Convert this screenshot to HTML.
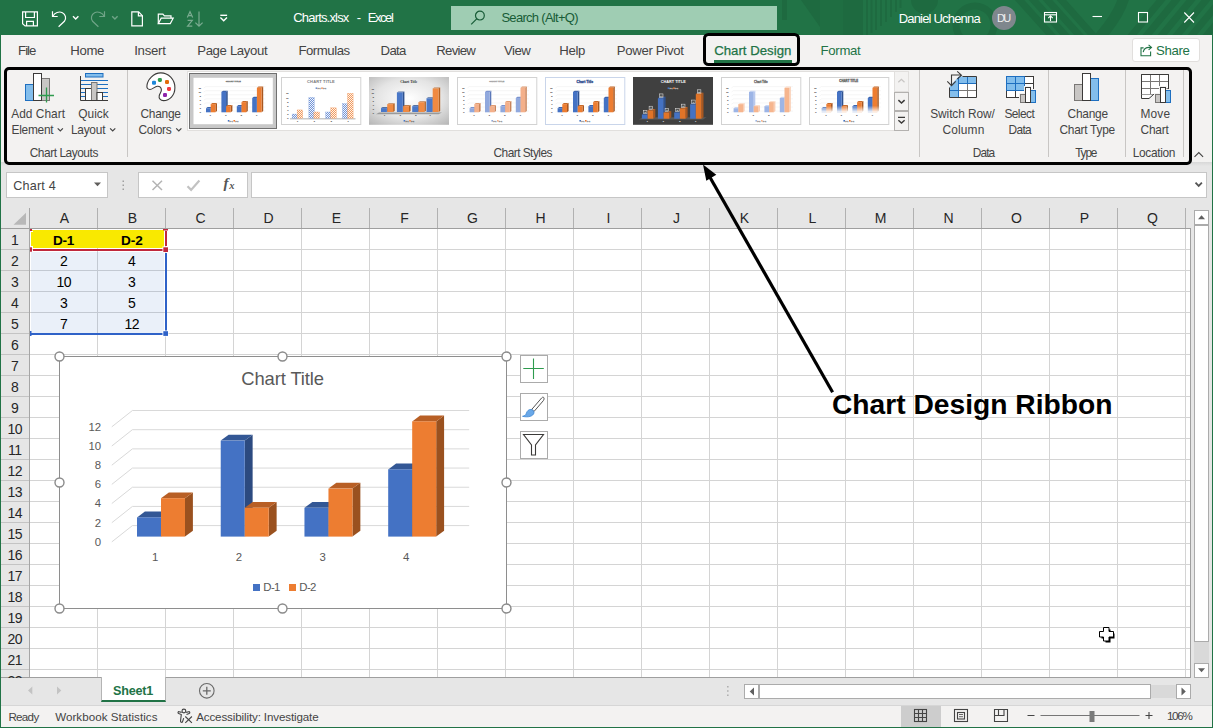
<!DOCTYPE html>
<html lang="en"><head><meta charset="utf-8"><title>Charts.xlsx - Excel</title>
<style>
*{box-sizing:border-box;margin:0;padding:0}
html,body{width:1213px;height:728px;overflow:hidden;background:#e6e6e6}
body{font-family:"Liberation Sans",sans-serif;position:relative}
#app{position:absolute;left:0;top:0;width:1213px;height:728px;overflow:hidden;background:#e6e6e6}
.a{position:absolute}
.t{position:absolute;white-space:pre}
svg{position:absolute;overflow:visible}

#titlebar{left:0;top:0;width:1213px;height:35px;background:#217346;overflow:hidden}
#search{left:451px;top:6px;width:326px;height:24px;background:#9fcdb3}
#avatar{left:992px;top:6px;width:24px;height:24px;border-radius:50%;background:#7f878d}
#tabs{left:1px;top:35px;width:1211px;height:32px;background:#f3f2f1}
#sharebtn{left:1132px;top:38px;width:68px;height:24px;background:#fff;border:1px solid #e1dfdd;border-radius:3px}
#tabul{left:714px;top:60px;width:78px;height:3px;background:#217346}

#ribbon{left:1px;top:67px;width:1211px;height:95px;background:#f3f2f1}
#ribshadow{left:1px;top:162px;width:1211px;height:4px;background:linear-gradient(#d8d8d8,#e6e6e6)}
.sep{width:1px;top:70px;height:87px;background:#c8c6c4}
#gallery{left:187px;top:71px;width:708px;height:60px;background:#fff;border:1px solid #e1dfdd}
.gbtn{left:894px;width:15px;border:1px solid #b3b1af;background:#f3f2f1}

#namebox{left:6px;top:172px;width:102px;height:26px;background:#fff;border:1px solid #c6c6c6}
#fxbox{left:138px;top:172px;width:110px;height:26px;background:#fff;border:1px solid #c6c6c6}
#fbox{left:251px;top:172px;width:956px;height:26px;background:#fff;border:1px solid #c6c6c6}
#cells{left:30px;top:229px;width:1160px;height:448px;background-color:#fff;
 background-image:linear-gradient(to right,#d4d4d4 1px,transparent 1px),linear-gradient(to bottom,#d4d4d4 1px,transparent 1px);
 background-size:68px 21px;background-position:67px 20px}
#colhdr{left:30px;top:208px;width:1160px;height:20px;background-image:linear-gradient(to right,#b1b1b1 1px,transparent 1px);background-size:68px 20px;background-position:67px 0}
#rowhdr{left:1px;top:229px;width:28px;height:448px;background-image:linear-gradient(to bottom,#c4c4c4 1px,transparent 1px);background-size:28px 21px;background-position:0 20px}
#hline{left:1px;top:228px;width:1190px;height:1px;background:#9f9f9f}
#vline{left:29px;top:208px;width:1px;height:469px;background:#a6a6a6}
#rline{left:1190px;top:228px;width:1px;height:450px;background:#9f9f9f}
#bline{left:1px;top:677px;width:1190px;height:1px;background:#9f9f9f}
#yel{left:31px;top:230px;width:133px;height:18px;background:#f9e900}
#blu{left:31px;top:252px;width:133px;height:81px;background:rgba(68,114,196,0.11)}
.sb{background:#fff;border:1px solid #ababab}

#chart{left:59px;top:356px;width:448px;height:253px;background:#fff;border:1px solid #8e8e8e}
.cbtn{left:520px;width:28px;height:28px;background:#fff;border:1px solid #ababab}

#tabbar{left:1px;top:678px;width:1211px;height:27px;background:#e6e6e6}
#sheettab{left:101px;top:677px;width:65px;height:25px;background:#fff;border-left:1px solid #b4b4b4;border-right:1px solid #b4b4b4;border-bottom:2px solid #217346}
#status{left:1px;top:705px;width:1211px;height:22px;background:#f3f2f1;border-top:1px solid #d6d6d6}
#viewsel{left:901px;top:706px;width:40px;height:21px;background:#cdcdcd}
#winL{left:0;top:35px;width:1px;height:693px;background:#217346}
#winR{left:1212px;top:35px;width:1px;height:693px;background:#217346}
#winB{left:0;top:727px;width:1213px;height:1px;background:#217346}

#boxR{left:4px;top:67px;width:1188px;height:98px;border:3px solid #000;border-radius:5px}
#boxT{left:703px;top:33px;width:97px;height:33px;border:3px solid #000;border-radius:5.500px}
</style></head>
<body><div id="app">
<div id="titlebar" class="a"><svg width="1213" height="35" style="left:0;top:0" viewBox="0 0 1213 35">
<g fill="#1e6a40" stroke="none">
<rect x="782" y="0" width="5" height="20"/>
<path d="M801 0h19v27z"/>
<rect x="820" y="0" width="23" height="35" opacity="0.600"/>
<rect x="843" y="0" width="20" height="35"/>
<path d="M866 0h2v35h-2zM870.500 0h2v33h-2zM875 0h2v30h-2zM880 0h2v26h-2zM885 0h2v22h-2zM890 0h2v17h-2zM895 0h2v12h-2zM899.500 0h2v8h-2z"/>
<path d="M911 0a13.500 13.500 0 0 0 27 0z"/>
</g>
<g fill="none" stroke="#1e6a40">
<circle cx="975" cy="25" r="19" stroke-width="7"/>
<path d="M1015 -5l45 50M1029 -5l45 50M1043 -5l45 50M1057 -5l40 45" stroke-width="7"/>
<path d="M1124 -3c-3 12-12 26-24 40" stroke-width="11"/>
<path d="M1128 40l38 -46M1143 40l38 -46M1158 40l38 -46M1173 40l38 -46M1188 40l38 -46M1203 40l38 -46" stroke-width="7"/>
</g></svg><svg width="240" height="35" style="left:0;top:0" viewBox="0 0 240 35" fill="none" stroke="#fff" stroke-width="1.2">
<path d="M22.6 11.9h14.8v14h-12.3l-2.5-2.2z"/><path d="M25.6 11.9v5.6h8.8v-5.6"/><path d="M26.6 25.9v-4.6h6.8v4.6"/>
<path d="M52.5 11.3v5.2h5.2"/><path d="M52.8 16.3c2-3.6 6.2-5.300 9.6-3.6c3.300 1.7 4.200 5.600 2 8.600l-5.800 5.400"/>
<path d="M73 16.200l2.700 2.700l2.700-2.700" stroke-width="1.4"/>
<g opacity="0.35"><path d="M104.500 11.3v5.200h-5.200"/><path d="M104.200 16.3c-2-3.6-6.200-5.300-9.600-3.600c-3.300 1.700-4.200 5.600-2 8.600l5.800 5.400"/>
<path d="M112.200 16.200l2.700 2.700l2.700-2.700" stroke-width="1.400"/></g>
<path d="M131.800 11.900h6.800l3.800 3.800v10.200h-10.600z"/><path d="M138.400 11.900v4h4"/>
<path d="M158.300 23.500v-9.400h4.600l1.500 1.700h6.600v2.400"/><path d="M158.300 23.600l2.900-5.400h12l-2.900 5.400z"/>
<g opacity="0.4"><path d="M187.300 17.500l2.700-5.800l2.700 5.800M188.200 15.600h3.600"/><path d="M187.600 20.300h4.700l-4.700 5.900h4.700"/><path d="M199 11.600v14.500M195.400 22.600l3.600 3.600l3.600-3.600"/></g>
<path d="M220.300 15.300h6.800" stroke-width="1.400"/><path d="M220.400 17.600l3.300 3.200l3.300-3.200" stroke-width="1.400"/>
</svg><span class="t" style="left:293.30px;top:9.00px;font-size:13px;line-height:17px;color:#fff;letter-spacing:-0.828px;">Charts.xlsx</span><span class="t" style="left:356.80px;top:9.00px;font-size:13px;line-height:17px;color:#fff;letter-spacing:0.000px;">-</span><span class="t" style="left:367.70px;top:9.00px;font-size:13px;line-height:17px;color:#fff;letter-spacing:-1.421px;">Excel</span><div id="search" class="a"></div><svg width="16" height="16" style="left:470px;top:10px" viewBox="0 0 16 16" fill="none" stroke="#185c37" stroke-width="1.2"><circle cx="9.900" cy="5.600" r="4.400"/><path d="M6.700 8.800l-5.500 5.600"/></svg><span class="t" style="left:501.40px;top:9.30px;font-size:13px;line-height:17px;color:#185c37;letter-spacing:-0.702px;">Search (Alt+Q)</span><span class="t" style="left:898.70px;top:9.60px;font-size:13px;line-height:17px;color:#fff;letter-spacing:-0.812px;">Daniel Uchenna</span><div id="avatar" class="a"></div><span class="t" style="left:996.90px;top:11.00px;font-size:11px;line-height:14px;color:#f0f0f0;letter-spacing:-1.595px;">DU</span><svg width="180" height="35" style="left:1033px;top:0" viewBox="1033 0 180 35" fill="none" stroke="#fff" stroke-width="1.100">
<rect x="1044.5" y="12.500" width="12" height="9.500"/><path d="M1044.500 14.800h12" /><path d="M1050.500 21v-4.800M1048.300 18.100l2.200-2.200l2.200 2.200"/>
<path d="M1092.500 16.500h9.500"/>
<rect x="1138.500" y="12.500" width="9" height="9.500"/>
<path d="M1184.300 12.500l9.700 10M1194 12.500l-9.700 10"/>
</svg></div><div id="tabs" class="a"></div><span class="t" style="left:18.10px;top:41.90px;font-size:13.2px;line-height:17px;color:#444;letter-spacing:-1.017px;">File</span><span class="t" style="left:70.20px;top:41.90px;font-size:13.2px;line-height:17px;color:#444;letter-spacing:-0.315px;">Home</span><span class="t" style="left:134.20px;top:41.90px;font-size:13.2px;line-height:17px;color:#444;letter-spacing:-0.260px;">Insert</span><span class="t" style="left:197.20px;top:41.90px;font-size:13.2px;line-height:17px;color:#444;letter-spacing:-0.352px;">Page Layout</span><span class="t" style="left:298.40px;top:41.90px;font-size:13.2px;line-height:17px;color:#444;letter-spacing:-0.463px;">Formulas</span><span class="t" style="left:380.60px;top:41.90px;font-size:13.2px;line-height:17px;color:#444;letter-spacing:-0.739px;">Data</span><span class="t" style="left:436.30px;top:41.90px;font-size:13.2px;line-height:17px;color:#444;letter-spacing:-0.739px;">Review</span><span class="t" style="left:503.90px;top:41.90px;font-size:13.2px;line-height:17px;color:#444;letter-spacing:-0.460px;">View</span><span class="t" style="left:559.30px;top:41.90px;font-size:13.2px;line-height:17px;color:#444;letter-spacing:-0.375px;">Help</span><span class="t" style="left:616.70px;top:41.90px;font-size:13.2px;line-height:17px;color:#444;letter-spacing:-0.322px;">Power Pivot</span><span class="t" style="left:714.20px;top:41.90px;font-size:13.2px;line-height:17px;color:#217346;letter-spacing:0.016px;-webkit-text-stroke:0.25px #217346;">Chart Design</span><span class="t" style="left:820.60px;top:41.90px;font-size:13.2px;line-height:17px;color:#217346;letter-spacing:-0.316px;">Format</span><div id="tabul" class="a"></div><div id="sharebtn" class="a"></div><svg width="13" height="13" style="left:1139.500px;top:43.500px" viewBox="0 0 13 13" fill="none" stroke="#217346" stroke-width="1.100"><path d="M3.600 3.900h-2.600v7.900h9.600v-4.200"/><path d="M3.200 8.200c0.500-3 2.600-4.800 6.200-4.800h1.800"/><path d="M8.600 0.900l2.900 2.500l-2.900 2.500"/></svg><span class="t" style="left:1156.00px;top:41.70px;font-size:13.2px;line-height:17px;color:#217346;letter-spacing:-0.361px;">Share</span>
<div id="ribbon" class="a"></div><div id="ribshadow" class="a"></div><div class="a sep" style="left:127px"></div><div class="a sep" style="left:919px"></div><div class="a sep" style="left:1048px"></div><div class="a sep" style="left:1125px"></div><div class="a sep" style="left:1183px"></div><span class="t" style="left:11.20px;top:105.90px;font-size:11.9px;line-height:16px;color:#444;letter-spacing:0.036px;">Add Chart</span><span class="t" style="left:11.50px;top:121.70px;font-size:11.9px;line-height:16px;color:#444;letter-spacing:-0.262px;">Element</span><span class="t" style="left:78.30px;top:105.90px;font-size:11.9px;line-height:16px;color:#444;letter-spacing:0.009px;">Quick</span><span class="t" style="left:70.90px;top:121.70px;font-size:11.9px;line-height:16px;color:#444;letter-spacing:-0.232px;">Layout</span><span class="t" style="left:140.50px;top:105.90px;font-size:11.9px;line-height:16px;color:#444;letter-spacing:-0.242px;">Change</span><span class="t" style="left:138.50px;top:121.70px;font-size:11.9px;line-height:16px;color:#444;letter-spacing:-0.218px;">Colors</span><span class="t" style="left:29.70px;top:144.60px;font-size:11.9px;line-height:16px;color:#444;letter-spacing:-0.448px;">Chart Layouts</span><span class="t" style="left:493.50px;top:144.60px;font-size:11.9px;line-height:16px;color:#444;letter-spacing:-0.527px;">Chart Styles</span><span class="t" style="left:930.20px;top:105.90px;font-size:11.9px;line-height:16px;color:#444;letter-spacing:-0.071px;">Switch Row/</span><span class="t" style="left:942.60px;top:121.70px;font-size:11.9px;line-height:16px;color:#444;letter-spacing:0.141px;">Column</span><span class="t" style="left:1004.40px;top:105.90px;font-size:11.9px;line-height:16px;color:#444;letter-spacing:-0.536px;">Select</span><span class="t" style="left:1008.50px;top:121.70px;font-size:11.9px;line-height:16px;color:#444;letter-spacing:-0.656px;">Data</span><span class="t" style="left:972.70px;top:144.60px;font-size:11.9px;line-height:16px;color:#444;letter-spacing:-0.856px;">Data</span><span class="t" style="left:1067.50px;top:105.90px;font-size:11.9px;line-height:16px;color:#444;letter-spacing:-0.202px;">Change</span><span class="t" style="left:1059.50px;top:121.70px;font-size:11.9px;line-height:16px;color:#444;letter-spacing:-0.257px;">Chart Type</span><span class="t" style="left:1075.20px;top:144.60px;font-size:11.9px;line-height:16px;color:#444;letter-spacing:-1.174px;">Type</span><span class="t" style="left:1140.50px;top:105.90px;font-size:11.9px;line-height:16px;color:#444;letter-spacing:0.168px;">Move</span><span class="t" style="left:1140.50px;top:121.70px;font-size:11.9px;line-height:16px;color:#444;letter-spacing:-0.199px;">Chart</span><span class="t" style="left:1132.70px;top:144.60px;font-size:11.9px;line-height:16px;color:#444;letter-spacing:-0.312px;">Location</span><svg width="1213" height="100" style="left:0;top:65px" viewBox="0 65 1213 100" fill="none" stroke="#444" stroke-width="1.200"><path d="M57.7 128.300l2.600 2.600l2.600 -2.600"/><path d="M110.1 128.300l2.600 2.600l2.600 -2.600"/><path d="M176.2 128.300l2.600 2.600l2.600 -2.600"/><path d="M1194.500 156.800l4.300 -4.300l4.300 4.300" stroke-width="1.100"/></svg><svg width="1213" height="40" style="left:0;top:68px" viewBox="0 68 1213 40">
<g stroke-width="1">
<rect x="25.500" y="84.500" width="8" height="16" fill="#83beec" stroke="#1e6fc0"/>
<rect x="41.500" y="78.500" width="8" height="22" fill="#c8c6c4" stroke="#797775"/>
<rect x="33.500" y="73.500" width="8" height="27" fill="#fff" stroke="#3b3a39"/>
<path d="M46.500 87.500v15M38.500 95.500h15.500" stroke="#2e9b4e" stroke-width="1.300" fill="none"/>
</g>
<g stroke-width="1" fill="none">
<rect x="85.500" y="73.500" width="17.500" height="3.500" fill="#83beec" stroke="#1e6fc0"/>
<path d="M80.500 80.500h27.500M80.500 84.500h27.500M80.500 88.500h27.500M80.500 92.500h27.500M80.500 96.500h27.500" stroke="#1e6fc0"/>
<rect x="85.500" y="88.500" width="6" height="12" fill="#fff" stroke="#3b3a39"/>
<rect x="91.500" y="82.500" width="5.500" height="18" fill="#c8c6c4" stroke="#797775"/>
<rect x="97" y="92.500" width="5.500" height="8" fill="#fff" stroke="#3b3a39"/>
<path d="M80.500 76v24.500h27.500" stroke="#3b3a39"/>
</g>
<g>
<path d="M160.800 72.900C168.500 72.900 174.900 79.500 174.900 87.800C174.900 95.500 169.500 100.600 163.500 100.600C160.500 100.600 158.600 98.500 159.200 95.800C159.800 93.300 161.600 92 161.400 89.800C161.200 87.500 159.400 86.200 157.300 86.300C154.700 86.400 152.500 89.600 149.800 89.500C147.800 89.400 146.800 88 146.900 86.200C147.300 79.500 153.500 72.900 160.800 72.900Z" fill="#fff" stroke="#3b3a39" stroke-width="1.100"/>
<rect x="152" y="80.800" width="4" height="4" rx="1.300" fill="#1e88d8"/><rect x="157.900" y="77.900" width="4" height="4" rx="1.300" fill="#2e9b4e"/><rect x="165" y="80" width="4" height="4" rx="1.300" fill="#e36c0a"/><rect x="167" y="86.900" width="4" height="4" rx="1.300" fill="#ee3a43"/><rect x="163" y="93" width="4" height="4" rx="1.300" fill="#8e24aa"/>
</g>
<g stroke-width="1">
<rect x="949.500" y="76.500" width="27" height="21" fill="#fff"/>
<path d="M949.500 76.500h27v7h-18v14h-9z" fill="#83beec"/>
<path d="M958.500 83.500v14M967.500 83.500v14M958.500 90.500h18" stroke="#797775" fill="none"/>
<path d="M958.500 76.500v21M967.500 76.500v7M958.500 83.500h18M949.500 90.500h9" stroke="#1e6fc0" fill="none"/>
<path d="M945 70h19.800L945 91.600z" fill="#f3f2f1"/>
<path d="M962.500 76.500h14v21h-27v-10" stroke="#3b3a39" fill="none"/>
<path d="M951.500 85.500v-10.500h10M957.200 71.300l4.300 3.900l-4.300 4M947.300 81.300l4.200 4.400l4.200 -4.400" stroke="#3b3a39" fill="none" stroke-width="1.100"/>
</g>
<g stroke-width="1">
<rect x="1006.500" y="76.500" width="27" height="21" fill="#fff" stroke="#3b3a39"/>
<rect x="1006.500" y="76.500" width="18" height="14" fill="#83beec" stroke="#1e6fc0"/>
<path d="M1006.500 83.500h27M1006.500 90.500h27M1015.500 76.500v21M1024.500 76.500v21" stroke="#3b3a39" fill="none"/>
<path d="M1006.500 83.500h18M1015.500 76.500v14M1006.500 76.500h18v14h-18z" stroke="#1e6fc0" fill="none"/>
<path d="M1019 93h5v-7h7.500v3h5v14.500h-17.500z" fill="#f3f2f1"/>
<rect x="1020.500" y="94.500" width="5" height="8" fill="#c8c6c4" stroke="#797775"/>
<rect x="1030.500" y="90.500" width="5" height="12" fill="#83beec" stroke="#1e6fc0"/>
<rect x="1025.500" y="87.500" width="5" height="15" fill="#fff" stroke="#3b3a39"/>
</g>
<g stroke-width="1">
<rect x="1074.500" y="84.500" width="8" height="16" fill="#c8c6c4" stroke="#797775"/>
<rect x="1090.500" y="78.500" width="8" height="22" fill="#83beec" stroke="#1e6fc0"/>
<rect x="1082.500" y="73.500" width="8" height="27" fill="#fff" stroke="#3b3a39"/>
</g>
<g stroke-width="1" fill="none">
<path d="M1141.500 74.500h27v20h-27z" fill="#fff" stroke="#3b3a39"/>
<path d="M1141.500 81.500h27M1141.500 88.500h27M1150.500 74.500v20M1159.500 74.500v20" stroke="#797775"/>
<path d="M1141.500 74.500h27v20h-27z" stroke="#3b3a39"/>
<path d="M1141.500 94.500v4h7.500l4.500 -4" stroke="#3b3a39" fill="#fff"/>
<path d="M1154 93h5v-7h7.500v3h5v14.500h-17.500z" fill="#f3f2f1"/>
<rect x="1155.500" y="94.500" width="5" height="8" fill="#c8c6c4" stroke="#797775"/>
<rect x="1165.500" y="90.500" width="5" height="12" fill="#83beec" stroke="#1e6fc0"/>
<rect x="1160.500" y="87.500" width="5" height="15" fill="#fff" stroke="#3b3a39"/>
</g>
</svg><div id="gallery" class="a"></div><svg width="708" height="60" style="left:187px;top:71px" viewBox="187 71 708 60" font-family="Liberation Sans, sans-serif"><defs>
<pattern id="hb" width="2" height="2" patternUnits="userSpaceOnUse"><rect width="2" height="2" fill="#f2f5fc"/><path d="M-0.500 0.500L0.500 -0.500M0 2L2 0M1.500 2.500L2.500 1.500" stroke="#5b84d0" stroke-width="0.850"/></pattern>
<pattern id="ho" width="2" height="2" patternUnits="userSpaceOnUse"><rect width="2" height="2" fill="#fef3ea"/><path d="M-0.500 0.500L0.500 -0.500M0 2L2 0M1.500 2.500L2.500 1.500" stroke="#ee8b47" stroke-width="0.850"/></pattern>
<radialGradient id="rg3" cx="0.5" cy="0.45" r="0.75"><stop offset="0" stop-color="#ffffff"/><stop offset="0.55" stop-color="#e4e4e4"/><stop offset="1" stop-color="#b4b4b4"/></radialGradient>
<linearGradient id="fadew" x1="0" y1="0" x2="0" y2="1"><stop offset="0.72" stop-color="#fff" stop-opacity="0"/><stop offset="1" stop-color="#fff" stop-opacity="1"/></linearGradient>
<linearGradient id="gb4" x1="0" y1="0" x2="0" y2="1"><stop offset="0" stop-color="#7f9bd8"/><stop offset="1" stop-color="#b9c7ea"/></linearGradient>
</defs><rect x="189.500" y="73.500" width="87" height="55" fill="#c8c8c8" stroke="#707070" stroke-width="1"/><rect x="193.500" y="77.800" width="79.300" height="46.400" fill="#fff"/><path d="M203.9 112.30l2 -1.200H265.4" stroke="#e8e8e8" stroke-width="0.400" fill="none"/><path d="M203.9 108.22l2 -1.200H265.4" stroke="#e8e8e8" stroke-width="0.400" fill="none"/><path d="M203.9 104.14l2 -1.200H265.4" stroke="#e8e8e8" stroke-width="0.400" fill="none"/><path d="M203.9 100.06l2 -1.200H265.4" stroke="#e8e8e8" stroke-width="0.400" fill="none"/><path d="M203.9 95.98l2 -1.200H265.4" stroke="#e8e8e8" stroke-width="0.400" fill="none"/><path d="M203.9 91.90l2 -1.200H265.4" stroke="#e8e8e8" stroke-width="0.400" fill="none"/><path d="M203.9 87.82l2 -1.200H265.4" stroke="#e8e8e8" stroke-width="0.400" fill="none"/><text transform="translate(200.9 113.30) scale(0.085 0.1)" font-size="24" fill="#6e6e6e" stroke="#6e6e6e" stroke-width="2" text-anchor="end">0</text><text transform="translate(200.9 109.22) scale(0.085 0.1)" font-size="24" fill="#6e6e6e" stroke="#6e6e6e" stroke-width="2" text-anchor="end">2</text><text transform="translate(200.9 105.14) scale(0.085 0.1)" font-size="24" fill="#6e6e6e" stroke="#6e6e6e" stroke-width="2" text-anchor="end">4</text><text transform="translate(200.9 101.06) scale(0.085 0.1)" font-size="24" fill="#6e6e6e" stroke="#6e6e6e" stroke-width="2" text-anchor="end">6</text><text transform="translate(200.9 96.98) scale(0.085 0.1)" font-size="24" fill="#6e6e6e" stroke="#6e6e6e" stroke-width="2" text-anchor="end">8</text><text transform="translate(200.9 92.90) scale(0.085 0.1)" font-size="24" fill="#6e6e6e" stroke="#6e6e6e" stroke-width="2" text-anchor="end">10</text><text transform="translate(200.9 88.82) scale(0.085 0.1)" font-size="24" fill="#6e6e6e" stroke="#6e6e6e" stroke-width="2" text-anchor="end">12</text><text transform="translate(210.40 116.10) scale(0.085 0.1)" font-size="24" fill="#6e6e6e" stroke="#6e6e6e" stroke-width="2" text-anchor="middle">1</text><text transform="translate(225.80 116.10) scale(0.085 0.1)" font-size="24" fill="#6e6e6e" stroke="#6e6e6e" stroke-width="2" text-anchor="middle">2</text><text transform="translate(241.20 116.10) scale(0.085 0.1)" font-size="24" fill="#6e6e6e" stroke="#6e6e6e" stroke-width="2" text-anchor="middle">3</text><text transform="translate(256.60 116.10) scale(0.085 0.1)" font-size="24" fill="#6e6e6e" stroke="#6e6e6e" stroke-width="2" text-anchor="middle">4</text><text transform="translate(233.20 82.10) scale(0.1)" font-size="23.0" fill="#777" stroke="#777" stroke-width="3" font-weight="700" text-anchor="middle">CHART TITLE</text><g><path d="M210.70 108.22l1.6 -1.2V111.10L210.70 112.30z" fill="#2f528f"/><path d="M206.00 108.22l1.6 -1.2h4.7l-1.6 1.2z" fill="#3a63ad"/><rect x="206.00" y="108.22" width="4.7" height="4.08" fill="#4472c4"/><path d="M215.40 104.14l1.6 -1.2V111.10L215.40 112.30z" fill="#a85720"/><path d="M210.70 104.14l1.6 -1.2h4.7l-1.6 1.2z" fill="#c96a28"/><rect x="210.70" y="104.14" width="4.7" height="8.16" fill="#ed7d31"/><path d="M226.10 91.90l1.6 -1.2V111.10L226.10 112.30z" fill="#2f528f"/><path d="M221.40 91.90l1.6 -1.2h4.7l-1.6 1.2z" fill="#3a63ad"/><rect x="221.40" y="91.90" width="4.7" height="20.40" fill="#4472c4"/><path d="M230.80 106.18l1.6 -1.2V111.10L230.80 112.30z" fill="#a85720"/><path d="M226.10 106.18l1.6 -1.2h4.7l-1.6 1.2z" fill="#c96a28"/><rect x="226.10" y="106.18" width="4.7" height="6.12" fill="#ed7d31"/><path d="M241.50 106.18l1.6 -1.2V111.10L241.50 112.30z" fill="#2f528f"/><path d="M236.80 106.18l1.6 -1.2h4.7l-1.6 1.2z" fill="#3a63ad"/><rect x="236.80" y="106.18" width="4.7" height="6.12" fill="#4472c4"/><path d="M246.20 102.10l1.6 -1.2V111.10L246.20 112.30z" fill="#a85720"/><path d="M241.50 102.10l1.6 -1.2h4.7l-1.6 1.2z" fill="#c96a28"/><rect x="241.50" y="102.10" width="4.7" height="10.20" fill="#ed7d31"/><path d="M256.90 98.02l1.6 -1.2V111.10L256.90 112.30z" fill="#2f528f"/><path d="M252.20 98.02l1.6 -1.2h4.7l-1.6 1.2z" fill="#3a63ad"/><rect x="252.20" y="98.02" width="4.7" height="14.28" fill="#4472c4"/><path d="M261.60 87.82l1.6 -1.2V111.10L261.60 112.30z" fill="#a85720"/><path d="M256.90 87.82l1.6 -1.2h4.7l-1.6 1.2z" fill="#c96a28"/><rect x="256.90" y="87.82" width="4.7" height="24.48" fill="#ed7d31"/></g><rect x="227.80" y="120.00" width="1.600" height="1.600" fill="#4472c4"/><text transform="translate(229.60 121.60) scale(0.1)" font-size="20.0" fill="#8c8c8c" stroke="#8c8c8c" stroke-width="3">D-1</text><rect x="233.40" y="120.00" width="1.600" height="1.600" fill="#ed7d31"/><text transform="translate(235.20 121.60) scale(0.1)" font-size="20.0" fill="#8c8c8c" stroke="#8c8c8c" stroke-width="3">D-2</text><rect x="281.5" y="77.500" width="79.300" height="47" fill="#fff" stroke="#d2d2d2" stroke-width="1"/><text transform="translate(321 83.100) scale(0.1)" font-size="40.0"   fill="#7a7a7a" text-anchor="middle" font-weight="700" letter-spacing="1.5">CHART TITLE</text><rect x="315.60" y="87.40" width="1.600" height="1.600" fill="#6f93d6"/><text transform="translate(317.40 89.00) scale(0.1)" font-size="20.0" fill="#8c8c8c" stroke="#8c8c8c" stroke-width="3">D-1</text><rect x="321.20" y="87.40" width="1.600" height="1.600" fill="#f09a5e"/><text transform="translate(323.00 89.00) scale(0.1)" font-size="20.0" fill="#8c8c8c" stroke="#8c8c8c" stroke-width="3">D-2</text><rect x="290" y="118" width="65.500" height="1.500" fill="#c9c9c9"/><text transform="translate(288.5 119.20) scale(0.085 0.1)" font-size="24" fill="#6e6e6e" stroke="#6e6e6e" stroke-width="2" text-anchor="end">0</text><text transform="translate(288.5 115.06) scale(0.085 0.1)" font-size="24" fill="#6e6e6e" stroke="#6e6e6e" stroke-width="2" text-anchor="end">2</text><text transform="translate(288.5 110.92) scale(0.085 0.1)" font-size="24" fill="#6e6e6e" stroke="#6e6e6e" stroke-width="2" text-anchor="end">4</text><text transform="translate(288.5 106.78) scale(0.085 0.1)" font-size="24" fill="#6e6e6e" stroke="#6e6e6e" stroke-width="2" text-anchor="end">6</text><text transform="translate(288.5 102.64) scale(0.085 0.1)" font-size="24" fill="#6e6e6e" stroke="#6e6e6e" stroke-width="2" text-anchor="end">8</text><text transform="translate(288.5 98.50) scale(0.085 0.1)" font-size="24" fill="#6e6e6e" stroke="#6e6e6e" stroke-width="2" text-anchor="end">10</text><text transform="translate(288.5 94.36) scale(0.085 0.1)" font-size="24" fill="#6e6e6e" stroke="#6e6e6e" stroke-width="2" text-anchor="end">12</text><rect x="292.10" y="114.06" width="5.300" height="4.14" fill="url(#hb)" stroke="#6f93d6" stroke-width="0.300"/><rect x="297.10" y="109.92" width="5.600" height="8.28" fill="url(#ho)" stroke="#f09a5e" stroke-width="0.300"/><text transform="translate(297.60 122.400) scale(0.085 0.1)" font-size="24" fill="#6e6e6e" stroke="#6e6e6e" stroke-width="2" text-anchor="middle">1</text><rect x="308.90" y="97.50" width="5.300" height="20.70" fill="url(#hb)" stroke="#6f93d6" stroke-width="0.300"/><rect x="313.90" y="111.99" width="5.600" height="6.21" fill="url(#ho)" stroke="#f09a5e" stroke-width="0.300"/><text transform="translate(314.40 122.400) scale(0.085 0.1)" font-size="24" fill="#6e6e6e" stroke="#6e6e6e" stroke-width="2" text-anchor="middle">2</text><rect x="325.70" y="111.99" width="5.300" height="6.21" fill="url(#hb)" stroke="#6f93d6" stroke-width="0.300"/><rect x="330.70" y="107.85" width="5.600" height="10.35" fill="url(#ho)" stroke="#f09a5e" stroke-width="0.300"/><text transform="translate(331.20 122.400) scale(0.085 0.1)" font-size="24" fill="#6e6e6e" stroke="#6e6e6e" stroke-width="2" text-anchor="middle">3</text><rect x="342.50" y="103.71" width="5.300" height="14.49" fill="url(#hb)" stroke="#6f93d6" stroke-width="0.300"/><rect x="347.50" y="93.36" width="5.600" height="24.84" fill="url(#ho)" stroke="#f09a5e" stroke-width="0.300"/><text transform="translate(348.00 122.400) scale(0.085 0.1)" font-size="24" fill="#6e6e6e" stroke="#6e6e6e" stroke-width="2" text-anchor="middle">4</text><rect x="369" y="77" width="80" height="47.800" fill="url(#rg3)"/><text transform="translate(408.7 82.900) scale(0.1)" font-size="36.0"   fill="#333" text-anchor="middle" font-weight="700" font-family="Liberation Serif, serif">Chart Title</text><path d="M376 114.300l3 -1.800h63l-3.500 1.800z" fill="#9a9a9a"/><text transform="translate(374 113.60) scale(0.085 0.1)" font-size="24" fill="#666" stroke="#666" stroke-width="2" text-anchor="end">0</text><text transform="translate(374 109.60) scale(0.085 0.1)" font-size="24" fill="#666" stroke="#666" stroke-width="2" text-anchor="end">2</text><text transform="translate(374 105.60) scale(0.085 0.1)" font-size="24" fill="#666" stroke="#666" stroke-width="2" text-anchor="end">4</text><text transform="translate(374 101.60) scale(0.085 0.1)" font-size="24" fill="#666" stroke="#666" stroke-width="2" text-anchor="end">6</text><text transform="translate(374 97.60) scale(0.085 0.1)" font-size="24" fill="#666" stroke="#666" stroke-width="2" text-anchor="end">8</text><text transform="translate(374 93.60) scale(0.085 0.1)" font-size="24" fill="#666" stroke="#666" stroke-width="2" text-anchor="end">10</text><text transform="translate(374 89.60) scale(0.085 0.1)" font-size="24" fill="#666" stroke="#666" stroke-width="2" text-anchor="end">12</text><path d="M386.90 108.08l1.600 -1V111L386.90 112z" fill="#2f528f"/><path d="M381.00 108.08l1.600 -1h5.900l-1.600 1z" fill="#2f528f" opacity="0.800"/><rect x="381.00" y="108.08" width="5.900" height="3.92" fill="#4a78c8"/><path d="M393.10 104.16l1.600 -1V111L393.10 112z" fill="#b5601f"/><path d="M387.20 104.16l1.600 -1h5.900l-1.600 1z" fill="#b5601f" opacity="0.800"/><rect x="387.20" y="104.16" width="5.900" height="7.84" fill="#f08a42"/><text transform="translate(384.50 116.300) scale(0.085 0.1)" font-size="24" fill="#666" stroke="#666" stroke-width="2" text-anchor="middle">1</text><path d="M402.80 92.40l1.600 -1V111L402.80 112z" fill="#2f528f"/><path d="M396.90 92.40l1.600 -1h5.900l-1.600 1z" fill="#2f528f" opacity="0.800"/><rect x="396.90" y="92.40" width="5.900" height="19.60" fill="#4a78c8"/><path d="M409.00 106.12l1.600 -1V111L409.00 112z" fill="#b5601f"/><path d="M403.10 106.12l1.600 -1h5.900l-1.600 1z" fill="#b5601f" opacity="0.800"/><rect x="403.10" y="106.12" width="5.900" height="5.88" fill="#f08a42"/><text transform="translate(400.40 116.300) scale(0.085 0.1)" font-size="24" fill="#666" stroke="#666" stroke-width="2" text-anchor="middle">2</text><path d="M418.10 106.12l1.600 -1V111L418.10 112z" fill="#2f528f"/><path d="M412.20 106.12l1.600 -1h5.900l-1.600 1z" fill="#2f528f" opacity="0.800"/><rect x="412.20" y="106.12" width="5.900" height="5.88" fill="#4a78c8"/><path d="M424.30 102.20l1.600 -1V111L424.30 112z" fill="#b5601f"/><path d="M418.40 102.20l1.600 -1h5.900l-1.600 1z" fill="#b5601f" opacity="0.800"/><rect x="418.40" y="102.20" width="5.900" height="9.80" fill="#f08a42"/><text transform="translate(415.70 116.300) scale(0.085 0.1)" font-size="24" fill="#666" stroke="#666" stroke-width="2" text-anchor="middle">3</text><path d="M432.40 98.28l1.600 -1V111L432.40 112z" fill="#2f528f"/><path d="M426.50 98.28l1.600 -1h5.900l-1.600 1z" fill="#2f528f" opacity="0.800"/><rect x="426.50" y="98.28" width="5.900" height="13.72" fill="#4a78c8"/><path d="M438.60 88.48l1.600 -1V111L438.60 112z" fill="#b5601f"/><path d="M432.70 88.48l1.600 -1h5.900l-1.600 1z" fill="#b5601f" opacity="0.800"/><rect x="432.70" y="88.48" width="5.900" height="23.52" fill="#f08a42"/><text transform="translate(430.00 116.300) scale(0.085 0.1)" font-size="24" fill="#666" stroke="#666" stroke-width="2" text-anchor="middle">4</text><rect x="403.60" y="120.00" width="1.600" height="1.600" fill="#4a78c8"/><text transform="translate(405.40 121.60) scale(0.1)" font-size="20.0" fill="#777" stroke="#777" stroke-width="3">D-1</text><rect x="409.20" y="120.00" width="1.600" height="1.600" fill="#f08a42"/><text transform="translate(411.00 121.60) scale(0.1)" font-size="20.0" fill="#777" stroke="#777" stroke-width="3">D-2</text><rect x="457.5" y="77.500" width="79.300" height="47" fill="#fff" stroke="#d2d2d2" stroke-width="1"/><path d="M467.5 112.30l2 -1.200H529" stroke="#e8e8e8" stroke-width="0.400" fill="none"/><path d="M467.5 108.22l2 -1.200H529" stroke="#e8e8e8" stroke-width="0.400" fill="none"/><path d="M467.5 104.14l2 -1.200H529" stroke="#e8e8e8" stroke-width="0.400" fill="none"/><path d="M467.5 100.06l2 -1.200H529" stroke="#e8e8e8" stroke-width="0.400" fill="none"/><path d="M467.5 95.98l2 -1.200H529" stroke="#e8e8e8" stroke-width="0.400" fill="none"/><path d="M467.5 91.90l2 -1.200H529" stroke="#e8e8e8" stroke-width="0.400" fill="none"/><path d="M467.5 87.82l2 -1.200H529" stroke="#e8e8e8" stroke-width="0.400" fill="none"/><text transform="translate(464.5 113.30) scale(0.085 0.1)" font-size="24" fill="#6e6e6e" stroke="#6e6e6e" stroke-width="2" text-anchor="end">0</text><text transform="translate(464.5 109.22) scale(0.085 0.1)" font-size="24" fill="#6e6e6e" stroke="#6e6e6e" stroke-width="2" text-anchor="end">2</text><text transform="translate(464.5 105.14) scale(0.085 0.1)" font-size="24" fill="#6e6e6e" stroke="#6e6e6e" stroke-width="2" text-anchor="end">4</text><text transform="translate(464.5 101.06) scale(0.085 0.1)" font-size="24" fill="#6e6e6e" stroke="#6e6e6e" stroke-width="2" text-anchor="end">6</text><text transform="translate(464.5 96.98) scale(0.085 0.1)" font-size="24" fill="#6e6e6e" stroke="#6e6e6e" stroke-width="2" text-anchor="end">8</text><text transform="translate(464.5 92.90) scale(0.085 0.1)" font-size="24" fill="#6e6e6e" stroke="#6e6e6e" stroke-width="2" text-anchor="end">10</text><text transform="translate(464.5 88.82) scale(0.085 0.1)" font-size="24" fill="#6e6e6e" stroke="#6e6e6e" stroke-width="2" text-anchor="end">12</text><text transform="translate(474.00 116.10) scale(0.085 0.1)" font-size="24" fill="#6e6e6e" stroke="#6e6e6e" stroke-width="2" text-anchor="middle">1</text><text transform="translate(489.40 116.10) scale(0.085 0.1)" font-size="24" fill="#6e6e6e" stroke="#6e6e6e" stroke-width="2" text-anchor="middle">2</text><text transform="translate(504.80 116.10) scale(0.085 0.1)" font-size="24" fill="#6e6e6e" stroke="#6e6e6e" stroke-width="2" text-anchor="middle">3</text><text transform="translate(520.20 116.10) scale(0.085 0.1)" font-size="24" fill="#6e6e6e" stroke="#6e6e6e" stroke-width="2" text-anchor="middle">4</text><text transform="translate(496.80 82.10) scale(0.1)" font-size="23.0" fill="#a0a0a0" stroke="#a0a0a0" stroke-width="3" font-weight="700" text-anchor="middle">CHART TITLE</text><g><path d="M474.30 108.22l1.6 -1.2V111.10L474.30 112.30z" fill="#5b78b8"/><path d="M469.60 108.22l1.6 -1.2h4.7l-1.6 1.2z" fill="#7a93cf"/><rect x="469.60" y="108.22" width="4.7" height="4.08" fill="#90a8dd"/><path d="M479.00 104.14l1.6 -1.2V111.10L479.00 112.30z" fill="#c9845a"/><path d="M474.30 104.14l1.6 -1.2h4.7l-1.6 1.2z" fill="#e29b70"/><rect x="474.30" y="104.14" width="4.7" height="8.16" fill="#f4b08a"/><path d="M489.70 91.90l1.6 -1.2V111.10L489.70 112.30z" fill="#5b78b8"/><path d="M485.00 91.90l1.6 -1.2h4.7l-1.6 1.2z" fill="#7a93cf"/><rect x="485.00" y="91.90" width="4.7" height="20.40" fill="#90a8dd"/><path d="M494.40 106.18l1.6 -1.2V111.10L494.40 112.30z" fill="#c9845a"/><path d="M489.70 106.18l1.6 -1.2h4.7l-1.6 1.2z" fill="#e29b70"/><rect x="489.70" y="106.18" width="4.7" height="6.12" fill="#f4b08a"/><path d="M505.10 106.18l1.6 -1.2V111.10L505.10 112.30z" fill="#5b78b8"/><path d="M500.40 106.18l1.6 -1.2h4.7l-1.6 1.2z" fill="#7a93cf"/><rect x="500.40" y="106.18" width="4.7" height="6.12" fill="#90a8dd"/><path d="M509.80 102.10l1.6 -1.2V111.10L509.80 112.30z" fill="#c9845a"/><path d="M505.10 102.10l1.6 -1.2h4.7l-1.6 1.2z" fill="#e29b70"/><rect x="505.10" y="102.10" width="4.7" height="10.20" fill="#f4b08a"/><path d="M520.50 98.02l1.6 -1.2V111.10L520.50 112.30z" fill="#5b78b8"/><path d="M515.80 98.02l1.6 -1.2h4.7l-1.6 1.2z" fill="#7a93cf"/><rect x="515.80" y="98.02" width="4.7" height="14.28" fill="#90a8dd"/><path d="M525.20 87.82l1.6 -1.2V111.10L525.20 112.30z" fill="#c9845a"/><path d="M520.50 87.82l1.6 -1.2h4.7l-1.6 1.2z" fill="#e29b70"/><rect x="520.50" y="87.82" width="4.7" height="24.48" fill="#f4b08a"/></g><rect x="491.40" y="120.00" width="1.600" height="1.600" fill="#90a8dd"/><text transform="translate(493.20 121.60) scale(0.1)" font-size="20.0" fill="#8c8c8c" stroke="#8c8c8c" stroke-width="3">D-1</text><rect x="497.00" y="120.00" width="1.600" height="1.600" fill="#f4b08a"/><text transform="translate(498.80 121.60) scale(0.1)" font-size="20.0" fill="#8c8c8c" stroke="#8c8c8c" stroke-width="3">D-2</text><rect x="545.5" y="77.500" width="79.300" height="47" fill="#fff" stroke="#c9d5ea" stroke-width="1"/><path d="M555.5 112.30l2 -1.200H617" stroke="#e8e8e8" stroke-width="0.400" fill="none"/><path d="M555.5 108.22l2 -1.200H617" stroke="#e8e8e8" stroke-width="0.400" fill="none"/><path d="M555.5 104.14l2 -1.200H617" stroke="#e8e8e8" stroke-width="0.400" fill="none"/><path d="M555.5 100.06l2 -1.200H617" stroke="#e8e8e8" stroke-width="0.400" fill="none"/><path d="M555.5 95.98l2 -1.200H617" stroke="#e8e8e8" stroke-width="0.400" fill="none"/><path d="M555.5 91.90l2 -1.200H617" stroke="#e8e8e8" stroke-width="0.400" fill="none"/><path d="M555.5 87.82l2 -1.200H617" stroke="#e8e8e8" stroke-width="0.400" fill="none"/><text transform="translate(552.5 113.30) scale(0.085 0.1)" font-size="24" fill="#6e6e6e" stroke="#6e6e6e" stroke-width="2" text-anchor="end">0</text><text transform="translate(552.5 109.22) scale(0.085 0.1)" font-size="24" fill="#6e6e6e" stroke="#6e6e6e" stroke-width="2" text-anchor="end">2</text><text transform="translate(552.5 105.14) scale(0.085 0.1)" font-size="24" fill="#6e6e6e" stroke="#6e6e6e" stroke-width="2" text-anchor="end">4</text><text transform="translate(552.5 101.06) scale(0.085 0.1)" font-size="24" fill="#6e6e6e" stroke="#6e6e6e" stroke-width="2" text-anchor="end">6</text><text transform="translate(552.5 96.98) scale(0.085 0.1)" font-size="24" fill="#6e6e6e" stroke="#6e6e6e" stroke-width="2" text-anchor="end">8</text><text transform="translate(552.5 92.90) scale(0.085 0.1)" font-size="24" fill="#6e6e6e" stroke="#6e6e6e" stroke-width="2" text-anchor="end">10</text><text transform="translate(552.5 88.82) scale(0.085 0.1)" font-size="24" fill="#6e6e6e" stroke="#6e6e6e" stroke-width="2" text-anchor="end">12</text><text transform="translate(562.00 116.10) scale(0.085 0.1)" font-size="24" fill="#6e6e6e" stroke="#6e6e6e" stroke-width="2" text-anchor="middle">1</text><text transform="translate(577.40 116.10) scale(0.085 0.1)" font-size="24" fill="#6e6e6e" stroke="#6e6e6e" stroke-width="2" text-anchor="middle">2</text><text transform="translate(592.80 116.10) scale(0.085 0.1)" font-size="24" fill="#6e6e6e" stroke="#6e6e6e" stroke-width="2" text-anchor="middle">3</text><text transform="translate(608.20 116.10) scale(0.085 0.1)" font-size="24" fill="#6e6e6e" stroke="#6e6e6e" stroke-width="2" text-anchor="middle">4</text><text transform="translate(584.80 82.80) scale(0.1)" font-size="34.0" fill="#2f4f8f" stroke="#2f4f8f" stroke-width="3" font-weight="700" text-anchor="middle">Chart Title</text><g><path d="M562.30 108.22l1.6 -1.2V111.10L562.30 112.30z" fill="#2f528f"/><path d="M557.60 108.22l1.6 -1.2h4.7l-1.6 1.2z" fill="#3a63ad"/><rect x="557.60" y="108.22" width="4.7" height="4.08" fill="#4472c4"/><path d="M567.00 104.14l1.6 -1.2V111.10L567.00 112.30z" fill="#a85720"/><path d="M562.30 104.14l1.6 -1.2h4.7l-1.6 1.2z" fill="#c96a28"/><rect x="562.30" y="104.14" width="4.7" height="8.16" fill="#ed7d31"/><path d="M577.70 91.90l1.6 -1.2V111.10L577.70 112.30z" fill="#2f528f"/><path d="M573.00 91.90l1.6 -1.2h4.7l-1.6 1.2z" fill="#3a63ad"/><rect x="573.00" y="91.90" width="4.7" height="20.40" fill="#4472c4"/><path d="M582.40 106.18l1.6 -1.2V111.10L582.40 112.30z" fill="#a85720"/><path d="M577.70 106.18l1.6 -1.2h4.7l-1.6 1.2z" fill="#c96a28"/><rect x="577.70" y="106.18" width="4.7" height="6.12" fill="#ed7d31"/><path d="M593.10 106.18l1.6 -1.2V111.10L593.10 112.30z" fill="#2f528f"/><path d="M588.40 106.18l1.6 -1.2h4.7l-1.6 1.2z" fill="#3a63ad"/><rect x="588.40" y="106.18" width="4.7" height="6.12" fill="#4472c4"/><path d="M597.80 102.10l1.6 -1.2V111.10L597.80 112.30z" fill="#a85720"/><path d="M593.10 102.10l1.6 -1.2h4.7l-1.6 1.2z" fill="#c96a28"/><rect x="593.10" y="102.10" width="4.7" height="10.20" fill="#ed7d31"/><path d="M608.50 98.02l1.6 -1.2V111.10L608.50 112.30z" fill="#2f528f"/><path d="M603.80 98.02l1.6 -1.2h4.7l-1.6 1.2z" fill="#3a63ad"/><rect x="603.80" y="98.02" width="4.7" height="14.28" fill="#4472c4"/><path d="M613.20 87.82l1.6 -1.2V111.10L613.20 112.30z" fill="#a85720"/><path d="M608.50 87.82l1.6 -1.2h4.7l-1.6 1.2z" fill="#c96a28"/><rect x="608.50" y="87.82" width="4.7" height="24.48" fill="#ed7d31"/></g><rect x="579.40" y="120.00" width="1.600" height="1.600" fill="#4472c4"/><text transform="translate(581.20 121.60) scale(0.1)" font-size="20.0" fill="#8c8c8c" stroke="#8c8c8c" stroke-width="3">D-1</text><rect x="585.00" y="120.00" width="1.600" height="1.600" fill="#ed7d31"/><text transform="translate(586.80 121.60) scale(0.1)" font-size="20.0" fill="#8c8c8c" stroke="#8c8c8c" stroke-width="3">D-2</text><rect x="633" y="77" width="80" height="47.800" fill="#404040"/><text transform="translate(673.3 83.100) scale(0.1)" font-size="38.0"   fill="#fff" text-anchor="middle" font-weight="700">CHART TITLE</text><rect x="667.60" y="87.40" width="1.600" height="1.600" fill="#4472c4"/><text transform="translate(669.40 89.00) scale(0.1)" font-size="20.0" fill="#bbb" stroke="#bbb" stroke-width="3">D-1</text><rect x="673.20" y="87.40" width="1.600" height="1.600" fill="#ed7d31"/><text transform="translate(675.00 89.00) scale(0.1)" font-size="20.0" fill="#bbb" stroke="#bbb" stroke-width="3">D-2</text><path d="M639 119.500l3.500 -2.200h64l-3.500 2.200z" fill="#5a5a5a"/><path d="M647.60 114.60l2 -1.400V117.300L647.60 118.700z" fill="#2f528f"/><path d="M641.90 114.60l2 -1.400h5.700l-2 1.400z" fill="#3a63ad"/><rect x="641.90" y="114.60" width="5.700" height="4.10" fill="#4472c4"/><rect x="643.40" y="110.30" width="3.600" height="3.400" fill="#555" stroke="#e8e8e8" stroke-width="0.500"/><text transform="translate(645.20 113.10) scale(0.1)" font-size="24.0"   fill="#fff" text-anchor="middle">2</text><path d="M653.30 110.50l2 -1.400V117.300L653.30 118.700z" fill="#a85720"/><path d="M647.60 110.50l2 -1.400h5.700l-2 1.400z" fill="#c96a28"/><rect x="647.60" y="110.50" width="5.700" height="8.20" fill="#e07428"/><rect x="649.10" y="106.20" width="3.600" height="3.400" fill="#555" stroke="#e8e8e8" stroke-width="0.500"/><text transform="translate(650.90 109.00) scale(0.1)" font-size="24.0"   fill="#fff" text-anchor="middle">4</text><text transform="translate(647.40 122.400) scale(0.085 0.1)" font-size="24" fill="#ccc" stroke="#ccc" stroke-width="2" text-anchor="middle">1</text><path d="M663.60 98.20l2 -1.400V117.300L663.60 118.700z" fill="#2f528f"/><path d="M657.90 98.20l2 -1.400h5.700l-2 1.400z" fill="#3a63ad"/><rect x="657.90" y="98.20" width="5.700" height="20.50" fill="#4472c4"/><rect x="659.40" y="93.90" width="3.600" height="3.400" fill="#555" stroke="#e8e8e8" stroke-width="0.500"/><text transform="translate(661.20 96.70) scale(0.1)" font-size="24.0"   fill="#fff" text-anchor="middle">10</text><path d="M669.30 112.55l2 -1.400V117.300L669.30 118.700z" fill="#a85720"/><path d="M663.60 112.55l2 -1.400h5.700l-2 1.400z" fill="#c96a28"/><rect x="663.60" y="112.55" width="5.700" height="6.15" fill="#e07428"/><rect x="665.10" y="108.25" width="3.600" height="3.400" fill="#555" stroke="#e8e8e8" stroke-width="0.500"/><text transform="translate(666.90 111.05) scale(0.1)" font-size="24.0"   fill="#fff" text-anchor="middle">3</text><text transform="translate(663.40 122.400) scale(0.085 0.1)" font-size="24" fill="#ccc" stroke="#ccc" stroke-width="2" text-anchor="middle">2</text><path d="M679.90 112.55l2 -1.400V117.300L679.90 118.700z" fill="#2f528f"/><path d="M674.20 112.55l2 -1.400h5.700l-2 1.400z" fill="#3a63ad"/><rect x="674.20" y="112.55" width="5.700" height="6.15" fill="#4472c4"/><rect x="675.70" y="108.25" width="3.600" height="3.400" fill="#555" stroke="#e8e8e8" stroke-width="0.500"/><text transform="translate(677.50 111.05) scale(0.1)" font-size="24.0"   fill="#fff" text-anchor="middle">3</text><path d="M685.60 108.45l2 -1.400V117.300L685.60 118.700z" fill="#a85720"/><path d="M679.90 108.45l2 -1.400h5.700l-2 1.400z" fill="#c96a28"/><rect x="679.90" y="108.45" width="5.700" height="10.25" fill="#e07428"/><rect x="681.40" y="104.15" width="3.600" height="3.400" fill="#555" stroke="#e8e8e8" stroke-width="0.500"/><text transform="translate(683.20 106.95) scale(0.1)" font-size="24.0"   fill="#fff" text-anchor="middle">5</text><text transform="translate(679.70 122.400) scale(0.085 0.1)" font-size="24" fill="#ccc" stroke="#ccc" stroke-width="2" text-anchor="middle">3</text><path d="M695.80 104.35l2 -1.400V117.300L695.80 118.700z" fill="#2f528f"/><path d="M690.10 104.35l2 -1.400h5.700l-2 1.400z" fill="#3a63ad"/><rect x="690.10" y="104.35" width="5.700" height="14.35" fill="#4472c4"/><rect x="691.60" y="100.05" width="3.600" height="3.400" fill="#555" stroke="#e8e8e8" stroke-width="0.500"/><text transform="translate(693.40 102.85) scale(0.1)" font-size="24.0"   fill="#fff" text-anchor="middle">7</text><path d="M701.50 94.10l2 -1.400V117.300L701.50 118.700z" fill="#a85720"/><path d="M695.80 94.10l2 -1.400h5.700l-2 1.400z" fill="#c96a28"/><rect x="695.80" y="94.10" width="5.700" height="24.60" fill="#e07428"/><rect x="697.30" y="89.80" width="3.600" height="3.400" fill="#555" stroke="#e8e8e8" stroke-width="0.500"/><text transform="translate(699.10 92.60) scale(0.1)" font-size="24.0"   fill="#fff" text-anchor="middle">12</text><text transform="translate(695.60 122.400) scale(0.085 0.1)" font-size="24" fill="#ccc" stroke="#ccc" stroke-width="2" text-anchor="middle">4</text><rect x="721.5" y="77.500" width="79.300" height="47" fill="#fff" stroke="#d2d2d2" stroke-width="1"/><path d="M731.5 112.30l2 -1.200H793" stroke="#e8e8e8" stroke-width="0.400" fill="none"/><path d="M731.5 108.22l2 -1.200H793" stroke="#e8e8e8" stroke-width="0.400" fill="none"/><path d="M731.5 104.14l2 -1.200H793" stroke="#e8e8e8" stroke-width="0.400" fill="none"/><path d="M731.5 100.06l2 -1.200H793" stroke="#e8e8e8" stroke-width="0.400" fill="none"/><path d="M731.5 95.98l2 -1.200H793" stroke="#e8e8e8" stroke-width="0.400" fill="none"/><path d="M731.5 91.90l2 -1.200H793" stroke="#e8e8e8" stroke-width="0.400" fill="none"/><path d="M731.5 87.82l2 -1.200H793" stroke="#e8e8e8" stroke-width="0.400" fill="none"/><text transform="translate(728.5 113.30) scale(0.085 0.1)" font-size="24" fill="#6e6e6e" stroke="#6e6e6e" stroke-width="2" text-anchor="end">0</text><text transform="translate(728.5 109.22) scale(0.085 0.1)" font-size="24" fill="#6e6e6e" stroke="#6e6e6e" stroke-width="2" text-anchor="end">2</text><text transform="translate(728.5 105.14) scale(0.085 0.1)" font-size="24" fill="#6e6e6e" stroke="#6e6e6e" stroke-width="2" text-anchor="end">4</text><text transform="translate(728.5 101.06) scale(0.085 0.1)" font-size="24" fill="#6e6e6e" stroke="#6e6e6e" stroke-width="2" text-anchor="end">6</text><text transform="translate(728.5 96.98) scale(0.085 0.1)" font-size="24" fill="#6e6e6e" stroke="#6e6e6e" stroke-width="2" text-anchor="end">8</text><text transform="translate(728.5 92.90) scale(0.085 0.1)" font-size="24" fill="#6e6e6e" stroke="#6e6e6e" stroke-width="2" text-anchor="end">10</text><text transform="translate(728.5 88.82) scale(0.085 0.1)" font-size="24" fill="#6e6e6e" stroke="#6e6e6e" stroke-width="2" text-anchor="end">12</text><text transform="translate(738.00 116.10) scale(0.085 0.1)" font-size="24" fill="#6e6e6e" stroke="#6e6e6e" stroke-width="2" text-anchor="middle">1</text><text transform="translate(753.40 116.10) scale(0.085 0.1)" font-size="24" fill="#6e6e6e" stroke="#6e6e6e" stroke-width="2" text-anchor="middle">2</text><text transform="translate(768.80 116.10) scale(0.085 0.1)" font-size="24" fill="#6e6e6e" stroke="#6e6e6e" stroke-width="2" text-anchor="middle">3</text><text transform="translate(784.20 116.10) scale(0.085 0.1)" font-size="24" fill="#6e6e6e" stroke="#6e6e6e" stroke-width="2" text-anchor="middle">4</text><text transform="translate(760.80 82.60) scale(0.1)" font-size="30.0" fill="#666" stroke="#666" stroke-width="3" font-weight="400" text-anchor="middle">Chart Title</text><g><path d="M738.30 108.22l1.6 -1.2V111.10L738.30 112.30z" fill="#b9c9ee"/><path d="M733.60 108.22l1.6 -1.2h4.7l-1.6 1.2z" fill="#c9d6f2"/><rect x="733.60" y="108.22" width="4.7" height="4.08" fill="#9db5e6"/><path d="M743.00 104.14l1.6 -1.2V111.10L743.00 112.30z" fill="#f9cdb3"/><path d="M738.30 104.14l1.6 -1.2h4.7l-1.6 1.2z" fill="#fbdcc9"/><rect x="738.30" y="104.14" width="4.7" height="8.16" fill="#f6b58e"/><path d="M753.70 91.90l1.6 -1.2V111.10L753.70 112.30z" fill="#b9c9ee"/><path d="M749.00 91.90l1.6 -1.2h4.7l-1.6 1.2z" fill="#c9d6f2"/><rect x="749.00" y="91.90" width="4.7" height="20.40" fill="#9db5e6"/><path d="M758.40 106.18l1.6 -1.2V111.10L758.40 112.30z" fill="#f9cdb3"/><path d="M753.70 106.18l1.6 -1.2h4.7l-1.6 1.2z" fill="#fbdcc9"/><rect x="753.70" y="106.18" width="4.7" height="6.12" fill="#f6b58e"/><path d="M769.10 106.18l1.6 -1.2V111.10L769.10 112.30z" fill="#b9c9ee"/><path d="M764.40 106.18l1.6 -1.2h4.7l-1.6 1.2z" fill="#c9d6f2"/><rect x="764.40" y="106.18" width="4.7" height="6.12" fill="#9db5e6"/><path d="M773.80 102.10l1.6 -1.2V111.10L773.80 112.30z" fill="#f9cdb3"/><path d="M769.10 102.10l1.6 -1.2h4.7l-1.6 1.2z" fill="#fbdcc9"/><rect x="769.10" y="102.10" width="4.7" height="10.20" fill="#f6b58e"/><path d="M784.50 98.02l1.6 -1.2V111.10L784.50 112.30z" fill="#b9c9ee"/><path d="M779.80 98.02l1.6 -1.2h4.7l-1.6 1.2z" fill="#c9d6f2"/><rect x="779.80" y="98.02" width="4.7" height="14.28" fill="#9db5e6"/><path d="M789.20 87.82l1.6 -1.2V111.10L789.20 112.30z" fill="#f9cdb3"/><path d="M784.50 87.82l1.6 -1.2h4.7l-1.6 1.2z" fill="#fbdcc9"/><rect x="784.50" y="87.82" width="4.7" height="24.48" fill="#f6b58e"/></g><rect x="755.40" y="120.00" width="1.600" height="1.600" fill="#9db5e6"/><text transform="translate(757.20 121.60) scale(0.1)" font-size="20.0" fill="#8c8c8c" stroke="#8c8c8c" stroke-width="3">D-1</text><rect x="761.00" y="120.00" width="1.600" height="1.600" fill="#f6b58e"/><text transform="translate(762.80 121.60) scale(0.1)" font-size="20.0" fill="#8c8c8c" stroke="#8c8c8c" stroke-width="3">D-2</text><rect x="809.5" y="77.500" width="79.300" height="47" fill="#fff" stroke="#d2d2d2" stroke-width="1"/><path d="M819.5 112.30l2 -1.200H881" stroke="#e8e8e8" stroke-width="0.400" fill="none"/><path d="M819.5 108.22l2 -1.200H881" stroke="#e8e8e8" stroke-width="0.400" fill="none"/><path d="M819.5 104.14l2 -1.200H881" stroke="#e8e8e8" stroke-width="0.400" fill="none"/><path d="M819.5 100.06l2 -1.200H881" stroke="#e8e8e8" stroke-width="0.400" fill="none"/><path d="M819.5 95.98l2 -1.200H881" stroke="#e8e8e8" stroke-width="0.400" fill="none"/><path d="M819.5 91.90l2 -1.200H881" stroke="#e8e8e8" stroke-width="0.400" fill="none"/><path d="M819.5 87.82l2 -1.200H881" stroke="#e8e8e8" stroke-width="0.400" fill="none"/><text transform="translate(816.5 113.30) scale(0.085 0.1)" font-size="24" fill="#6e6e6e" stroke="#6e6e6e" stroke-width="2" text-anchor="end">0</text><text transform="translate(816.5 109.22) scale(0.085 0.1)" font-size="24" fill="#6e6e6e" stroke="#6e6e6e" stroke-width="2" text-anchor="end">2</text><text transform="translate(816.5 105.14) scale(0.085 0.1)" font-size="24" fill="#6e6e6e" stroke="#6e6e6e" stroke-width="2" text-anchor="end">4</text><text transform="translate(816.5 101.06) scale(0.085 0.1)" font-size="24" fill="#6e6e6e" stroke="#6e6e6e" stroke-width="2" text-anchor="end">6</text><text transform="translate(816.5 96.98) scale(0.085 0.1)" font-size="24" fill="#6e6e6e" stroke="#6e6e6e" stroke-width="2" text-anchor="end">8</text><text transform="translate(816.5 92.90) scale(0.085 0.1)" font-size="24" fill="#6e6e6e" stroke="#6e6e6e" stroke-width="2" text-anchor="end">10</text><text transform="translate(816.5 88.82) scale(0.085 0.1)" font-size="24" fill="#6e6e6e" stroke="#6e6e6e" stroke-width="2" text-anchor="end">12</text><text transform="translate(826.00 116.10) scale(0.085 0.1)" font-size="24" fill="#6e6e6e" stroke="#6e6e6e" stroke-width="2" text-anchor="middle">1</text><text transform="translate(841.40 116.10) scale(0.085 0.1)" font-size="24" fill="#6e6e6e" stroke="#6e6e6e" stroke-width="2" text-anchor="middle">2</text><text transform="translate(856.80 116.10) scale(0.085 0.1)" font-size="24" fill="#6e6e6e" stroke="#6e6e6e" stroke-width="2" text-anchor="middle">3</text><text transform="translate(872.20 116.10) scale(0.085 0.1)" font-size="24" fill="#6e6e6e" stroke="#6e6e6e" stroke-width="2" text-anchor="middle">4</text><text transform="translate(848.80 82.40) scale(0.1)" font-size="29.0" fill="#6a6a6a" stroke="#6a6a6a" stroke-width="3" font-weight="700" text-anchor="middle">CHART TITLE</text><g><path d="M826.30 108.22l1.6 -1.2V111.10L826.30 112.30z" fill="#2f528f"/><path d="M821.60 108.22l1.6 -1.2h4.7l-1.6 1.2z" fill="#3a63ad"/><rect x="821.60" y="108.22" width="4.7" height="4.08" fill="#4472c4"/><path d="M831.00 104.14l1.6 -1.2V111.10L831.00 112.30z" fill="#a85720"/><path d="M826.30 104.14l1.6 -1.2h4.7l-1.6 1.2z" fill="#c96a28"/><rect x="826.30" y="104.14" width="4.7" height="8.16" fill="#ed7d31"/><path d="M841.70 91.90l1.6 -1.2V111.10L841.70 112.30z" fill="#2f528f"/><path d="M837.00 91.90l1.6 -1.2h4.7l-1.6 1.2z" fill="#3a63ad"/><rect x="837.00" y="91.90" width="4.7" height="20.40" fill="#4472c4"/><path d="M846.40 106.18l1.6 -1.2V111.10L846.40 112.30z" fill="#a85720"/><path d="M841.70 106.18l1.6 -1.2h4.7l-1.6 1.2z" fill="#c96a28"/><rect x="841.70" y="106.18" width="4.7" height="6.12" fill="#ed7d31"/><path d="M857.10 106.18l1.6 -1.2V111.10L857.10 112.30z" fill="#2f528f"/><path d="M852.40 106.18l1.6 -1.2h4.7l-1.6 1.2z" fill="#3a63ad"/><rect x="852.40" y="106.18" width="4.7" height="6.12" fill="#4472c4"/><path d="M861.80 102.10l1.6 -1.2V111.10L861.80 112.30z" fill="#a85720"/><path d="M857.10 102.10l1.6 -1.2h4.7l-1.6 1.2z" fill="#c96a28"/><rect x="857.10" y="102.10" width="4.7" height="10.20" fill="#ed7d31"/><path d="M872.50 98.02l1.6 -1.2V111.10L872.50 112.30z" fill="#2f528f"/><path d="M867.80 98.02l1.6 -1.2h4.7l-1.6 1.2z" fill="#3a63ad"/><rect x="867.80" y="98.02" width="4.7" height="14.28" fill="#4472c4"/><path d="M877.20 87.82l1.6 -1.2V111.10L877.20 112.30z" fill="#a85720"/><path d="M872.50 87.82l1.6 -1.2h4.7l-1.6 1.2z" fill="#c96a28"/><rect x="872.50" y="87.82" width="4.7" height="24.48" fill="#ed7d31"/></g><rect x="820" y="88" width="66" height="24.600" fill="url(#fadew)"/><rect x="843.40" y="120.00" width="1.600" height="1.600" fill="#4472c4"/><text transform="translate(845.20 121.60) scale(0.1)" font-size="20.0" fill="#8c8c8c" stroke="#8c8c8c" stroke-width="3">D-1</text><rect x="849.00" y="120.00" width="1.600" height="1.600" fill="#ed7d31"/><text transform="translate(850.80 121.60) scale(0.1)" font-size="20.0" fill="#8c8c8c" stroke="#8c8c8c" stroke-width="3">D-2</text></svg><div class="a gbtn" style="top:71px;height:21px;border-color:#e1dfdd"></div><div class="a gbtn" style="top:92px;height:19px"></div><div class="a gbtn" style="top:111px;height:20px"></div><svg width="15" height="60" style="left:894px;top:71px" viewBox="894 71 15 60" fill="none" stroke="#3b3a39" stroke-width="1.200">
<path d="M898.300 82.300l3.100 -2.900l3.100 2.900" stroke="#c8c6c4" stroke-width="1.300"/>
<path d="M898.400 100.100l3.100 2.900l3.100 -2.900" stroke-width="1.500"/>
<path d="M898 117.400h7M898.400 120.200l3.100 2.800l3.100 -2.800" stroke-width="1.400"/></svg>
<div id="namebox" class="a"></div><div id="fxbox" class="a"></div><div id="fbox" class="a"></div><span class="t" style="left:13.20px;top:177.80px;font-size:12.6px;line-height:16px;color:#444;letter-spacing:0.195px;">Chart 4</span><svg width="1213" height="40" style="left:0;top:165px" viewBox="0 165 1213 40">
<path d="M94 182.500h7l-3.500 3.800z" fill="#605e5c"/>
<path d="M122.500 180.500h1.500v1.500h-1.500zM122.500 184.500h1.500v1.500h-1.500zM122.500 188.500h1.500v1.500h-1.500z" fill="#a0a0a0"/>
<path d="M152.500 180.700l9.500 9.300M162 180.700l-9.500 9.300" stroke="#b4b4b4" stroke-width="1.500" fill="none"/>
<path d="M187.500 186.300l3.600 3.600l8.300 -9.400" stroke="#c2c2c2" stroke-width="2.200" fill="none"/>
<path d="M1195.500 182.700l3.200 3.200l3.200 -3.200" stroke="#555" stroke-width="1.800" fill="none"/>
</svg><span class="t" style="left:223.50px;top:174.40px;font-size:15px;line-height:18px;color:#555;letter-spacing:0.000px;font-weight:700;font-style:italic;font-family:'Liberation Serif',serif;">f</span><span class="t" style="left:229.36px;top:179.10px;font-size:10.5px;line-height:13px;color:#555;letter-spacing:0.000px;font-weight:700;font-style:italic;font-family:'Liberation Serif',serif;">x</span><div id="colhdr" class="a"></div><div id="rowhdr" class="a"></div><div id="cells" class="a"></div><div id="hline" class="a"></div><div id="vline" class="a"></div><div id="rline" class="a"></div><div id="bline" class="a"></div><svg width="30" height="22" style="left:0;top:207px" viewBox="0 207 30 22"><path d="M26 212.700v12h-12.500z" fill="#b8b8b8"/></svg><span class="t" style="left:59.81px;top:208.80px;font-size:14px;line-height:18px;color:#262626;letter-spacing:0.000px;">A</span><span class="t" style="left:127.84px;top:208.80px;font-size:14px;line-height:18px;color:#262626;letter-spacing:0.000px;">B</span><span class="t" style="left:195.46px;top:208.80px;font-size:14px;line-height:18px;color:#262626;letter-spacing:0.000px;">C</span><span class="t" style="left:263.46px;top:208.80px;font-size:14px;line-height:18px;color:#262626;letter-spacing:0.000px;">D</span><span class="t" style="left:331.85px;top:208.80px;font-size:14px;line-height:18px;color:#262626;letter-spacing:0.000px;">E</span><span class="t" style="left:400.23px;top:208.80px;font-size:14px;line-height:18px;color:#262626;letter-spacing:0.000px;">F</span><span class="t" style="left:467.04px;top:208.80px;font-size:14px;line-height:18px;color:#262626;letter-spacing:0.000px;">G</span><span class="t" style="left:535.46px;top:208.80px;font-size:14px;line-height:18px;color:#262626;letter-spacing:0.000px;">H</span><span class="t" style="left:606.54px;top:208.80px;font-size:14px;line-height:18px;color:#262626;letter-spacing:0.000px;">I</span><span class="t" style="left:673.00px;top:208.80px;font-size:14px;line-height:18px;color:#262626;letter-spacing:0.000px;">J</span><span class="t" style="left:739.85px;top:208.80px;font-size:14px;line-height:18px;color:#262626;letter-spacing:0.000px;">K</span><span class="t" style="left:808.62px;top:208.80px;font-size:14px;line-height:18px;color:#262626;letter-spacing:0.000px;">L</span><span class="t" style="left:874.65px;top:208.80px;font-size:14px;line-height:18px;color:#262626;letter-spacing:0.000px;">M</span><span class="t" style="left:943.46px;top:208.80px;font-size:14px;line-height:18px;color:#262626;letter-spacing:0.000px;">N</span><span class="t" style="left:1011.04px;top:208.80px;font-size:14px;line-height:18px;color:#262626;letter-spacing:0.000px;">O</span><span class="t" style="left:1079.85px;top:208.80px;font-size:14px;line-height:18px;color:#262626;letter-spacing:0.000px;">P</span><span class="t" style="left:1147.04px;top:208.80px;font-size:14px;line-height:18px;color:#262626;letter-spacing:0.000px;">Q</span><span class="t" style="left:11.12px;top:230.70px;font-size:14px;line-height:18px;color:#262626;letter-spacing:-0.400px;">1</span><span class="t" style="left:11.12px;top:251.70px;font-size:14px;line-height:18px;color:#262626;letter-spacing:-0.400px;">2</span><span class="t" style="left:11.12px;top:272.70px;font-size:14px;line-height:18px;color:#262626;letter-spacing:-0.400px;">3</span><span class="t" style="left:11.12px;top:293.70px;font-size:14px;line-height:18px;color:#262626;letter-spacing:-0.400px;">4</span><span class="t" style="left:11.12px;top:314.70px;font-size:14px;line-height:18px;color:#262626;letter-spacing:-0.400px;">5</span><span class="t" style="left:11.12px;top:335.70px;font-size:14px;line-height:18px;color:#262626;letter-spacing:-0.400px;">6</span><span class="t" style="left:11.12px;top:356.70px;font-size:14px;line-height:18px;color:#262626;letter-spacing:-0.400px;">7</span><span class="t" style="left:11.12px;top:377.70px;font-size:14px;line-height:18px;color:#262626;letter-spacing:-0.400px;">8</span><span class="t" style="left:11.12px;top:398.70px;font-size:14px;line-height:18px;color:#262626;letter-spacing:-0.400px;">9</span><span class="t" style="left:7.43px;top:419.70px;font-size:14px;line-height:18px;color:#262626;letter-spacing:-0.400px;">10</span><span class="t" style="left:7.92px;top:440.70px;font-size:14px;line-height:18px;color:#262626;letter-spacing:-0.400px;">11</span><span class="t" style="left:7.43px;top:461.70px;font-size:14px;line-height:18px;color:#262626;letter-spacing:-0.400px;">12</span><span class="t" style="left:7.43px;top:482.70px;font-size:14px;line-height:18px;color:#262626;letter-spacing:-0.400px;">13</span><span class="t" style="left:7.43px;top:503.70px;font-size:14px;line-height:18px;color:#262626;letter-spacing:-0.400px;">14</span><span class="t" style="left:7.43px;top:524.70px;font-size:14px;line-height:18px;color:#262626;letter-spacing:-0.400px;">15</span><span class="t" style="left:7.43px;top:545.70px;font-size:14px;line-height:18px;color:#262626;letter-spacing:-0.400px;">16</span><span class="t" style="left:7.43px;top:566.70px;font-size:14px;line-height:18px;color:#262626;letter-spacing:-0.400px;">17</span><span class="t" style="left:7.43px;top:587.70px;font-size:14px;line-height:18px;color:#262626;letter-spacing:-0.400px;">18</span><span class="t" style="left:7.43px;top:608.70px;font-size:14px;line-height:18px;color:#262626;letter-spacing:-0.400px;">19</span><span class="t" style="left:7.43px;top:629.70px;font-size:14px;line-height:18px;color:#262626;letter-spacing:-0.400px;">20</span><span class="t" style="left:7.43px;top:650.70px;font-size:14px;line-height:18px;color:#262626;letter-spacing:-0.400px;">21</span><span class="t" style="left:7.43px;top:671.70px;font-size:14px;line-height:18px;color:#262626;letter-spacing:-0.400px;">22</span><div id="yel" class="a"></div><div id="blu" class="a"></div><span class="t" style="left:52.90px;top:231.70px;font-size:13.6px;line-height:17px;color:#000;letter-spacing:-0.298px;font-weight:700;">D-1</span><span class="t" style="left:120.90px;top:231.70px;font-size:13.6px;line-height:17px;color:#000;letter-spacing:-0.048px;font-weight:700;">D-2</span><span class="t" style="left:60.12px;top:251.90px;font-size:14px;line-height:18px;color:#000;letter-spacing:-0.400px;">2</span><span class="t" style="left:128.12px;top:251.90px;font-size:14px;line-height:18px;color:#000;letter-spacing:-0.400px;">4</span><span class="t" style="left:56.43px;top:272.90px;font-size:14px;line-height:18px;color:#000;letter-spacing:-0.400px;">10</span><span class="t" style="left:128.12px;top:272.90px;font-size:14px;line-height:18px;color:#000;letter-spacing:-0.400px;">3</span><span class="t" style="left:60.12px;top:293.90px;font-size:14px;line-height:18px;color:#000;letter-spacing:-0.400px;">3</span><span class="t" style="left:128.12px;top:293.90px;font-size:14px;line-height:18px;color:#000;letter-spacing:-0.400px;">5</span><span class="t" style="left:60.12px;top:314.90px;font-size:14px;line-height:18px;color:#000;letter-spacing:-0.400px;">7</span><span class="t" style="left:124.43px;top:314.90px;font-size:14px;line-height:18px;color:#000;letter-spacing:-0.400px;">12</span><svg width="180" height="120" style="left:25px;top:225px" viewBox="25 225 180 120">
<rect x="33" y="249" width="130" height="2" fill="#c0283c"/>
<rect x="165" y="231" width="2" height="15" fill="#c0283c"/>
<rect x="163" y="229" width="5" height="1.500" fill="#c0283c"/>
<rect x="30" y="229" width="2" height="2" fill="#c0283c"/><rect x="31" y="231" width="2" height="1" fill="#fff"/><rect x="31" y="246" width="2" height="2" fill="#fff"/>
<rect x="162.500" y="246.500" width="6" height="6" fill="#fff"/>
<rect x="163.300" y="247.300" width="4.700" height="4.700" fill="#c0283c"/>
<rect x="30" y="247.300" width="2" height="4.400" fill="#c0283c"/>
<rect x="165" y="253" width="2" height="78" fill="#2f62c8"/>
<rect x="31" y="333" width="132" height="2" fill="#2f62c8"/>
<rect x="162.500" y="330.500" width="6" height="6" fill="#fff"/>
<rect x="163.300" y="331.200" width="4.700" height="4.700" fill="#2f62c8"/>
<rect x="30" y="331" width="1.500" height="5" fill="#2f62c8"/>
</svg><div class="a sb" style="left:1194px;top:210px;width:15px;height:15px"></div><div class="a sb" style="left:1194px;top:225px;width:15px;height:417px"></div><div class="a" style="left:1194px;top:642px;width:15px;height:22px;background:#d9d9d9"></div><div class="a sb" style="left:1194px;top:663px;width:15px;height:15px"></div><svg width="20" height="480" style="left:1192px;top:205px" viewBox="1192 205 20 480"><path d="M1198 219.300h7l-3.500 -4z" fill="#606060"/><path d="M1198 668.300h7l-3.500 4z" fill="#606060"/></svg>
<div id="chart" class="a"></div><svg width="470" height="270" style="left:50px;top:350px" viewBox="50 350 470 270" font-family="Liberation Sans, sans-serif"><path d="M111.800 541.90L132.400 525.60H469.200" stroke="#d9d9d9" stroke-width="1" fill="none"/><path d="M111.800 522.72L132.400 506.42H469.200" stroke="#d9d9d9" stroke-width="1" fill="none"/><path d="M111.800 503.54L132.400 487.24H469.200" stroke="#d9d9d9" stroke-width="1" fill="none"/><path d="M111.800 484.36L132.400 468.06H469.200" stroke="#d9d9d9" stroke-width="1" fill="none"/><path d="M111.800 465.18L132.400 448.88H469.200" stroke="#d9d9d9" stroke-width="1" fill="none"/><path d="M111.800 446.00L132.400 429.70H469.200" stroke="#d9d9d9" stroke-width="1" fill="none"/><path d="M111.800 426.82L132.400 410.52H469.200" stroke="#d9d9d9" stroke-width="1" fill="none"/><path d="M161.00 517.40l7.9 -5.8V530.80L161.00 536.60z" fill="#2c4a80"/><path d="M137.00 517.40l7.9 -5.8h24l-7.9 5.8z" fill="#335795"/><rect x="137.00" y="517.40" width="24" height="19.20" fill="#4472c4"/><path d="M185.00 498.20l7.9 -5.8V530.80L185.00 536.60z" fill="#9a511f"/><path d="M161.00 498.20l7.9 -5.8h24l-7.9 5.8z" fill="#b85f25"/><rect x="161.00" y="498.20" width="24" height="38.40" fill="#ed7d31"/><path d="M244.73 440.60l7.9 -5.8V530.80L244.73 536.60z" fill="#2c4a80"/><path d="M220.73 440.60l7.9 -5.8h24l-7.9 5.8z" fill="#335795"/><rect x="220.73" y="440.60" width="24" height="96.00" fill="#4472c4"/><path d="M268.73 507.80l7.9 -5.8V530.80L268.73 536.60z" fill="#9a511f"/><path d="M244.73 507.80l7.9 -5.8h24l-7.9 5.8z" fill="#b85f25"/><rect x="244.73" y="507.80" width="24" height="28.80" fill="#ed7d31"/><path d="M328.46 507.80l7.9 -5.8V530.80L328.46 536.60z" fill="#2c4a80"/><path d="M304.46 507.80l7.9 -5.8h24l-7.9 5.8z" fill="#335795"/><rect x="304.46" y="507.80" width="24" height="28.80" fill="#4472c4"/><path d="M352.46 488.60l7.9 -5.8V530.80L352.46 536.60z" fill="#9a511f"/><path d="M328.46 488.60l7.9 -5.8h24l-7.9 5.8z" fill="#b85f25"/><rect x="328.46" y="488.60" width="24" height="48.00" fill="#ed7d31"/><path d="M412.19 469.40l7.9 -5.8V530.80L412.19 536.60z" fill="#2c4a80"/><path d="M388.19 469.40l7.9 -5.8h24l-7.9 5.8z" fill="#335795"/><rect x="388.19" y="469.40" width="24" height="67.20" fill="#4472c4"/><path d="M436.19 421.40l7.9 -5.8V530.80L436.19 536.60z" fill="#9a511f"/><path d="M412.19 421.40l7.9 -5.8h24l-7.9 5.8z" fill="#b85f25"/><rect x="412.19" y="421.40" width="24" height="115.20" fill="#ed7d31"/><rect x="253" y="584" width="7" height="7" fill="#4472c4"/><rect x="289" y="584" width="7" height="7" fill="#ed7d31"/></svg><span class="t" style="left:241.30px;top:367.20px;font-size:18.4px;line-height:23px;color:#595959;letter-spacing:-0.111px;">Chart Title</span><span class="t" style="left:59.400px;width:41.300px;text-align:right;top:533.70px;font-size:11.400px;line-height:16px;color:#595959;letter-spacing:-0.300px">0</span><span class="t" style="left:59.400px;width:41.300px;text-align:right;top:514.52px;font-size:11.400px;line-height:16px;color:#595959;letter-spacing:-0.300px">2</span><span class="t" style="left:59.400px;width:41.300px;text-align:right;top:495.34px;font-size:11.400px;line-height:16px;color:#595959;letter-spacing:-0.300px">4</span><span class="t" style="left:59.400px;width:41.300px;text-align:right;top:476.16px;font-size:11.400px;line-height:16px;color:#595959;letter-spacing:-0.300px">6</span><span class="t" style="left:59.400px;width:41.300px;text-align:right;top:456.98px;font-size:11.400px;line-height:16px;color:#595959;letter-spacing:-0.300px">8</span><span class="t" style="left:59.400px;width:41.300px;text-align:right;top:437.80px;font-size:11.400px;line-height:16px;color:#595959;letter-spacing:-0.300px">10</span><span class="t" style="left:59.400px;width:41.300px;text-align:right;top:418.62px;font-size:11.400px;line-height:16px;color:#595959;letter-spacing:-0.300px">12</span><span class="t" style="left:145.10px;width:20px;text-align:center;top:549.100px;font-size:11.400px;line-height:16px;color:#595959">1</span><span class="t" style="left:228.83px;width:20px;text-align:center;top:549.100px;font-size:11.400px;line-height:16px;color:#595959">2</span><span class="t" style="left:312.56px;width:20px;text-align:center;top:549.100px;font-size:11.400px;line-height:16px;color:#595959">3</span><span class="t" style="left:396.29px;width:20px;text-align:center;top:549.100px;font-size:11.400px;line-height:16px;color:#595959">4</span><span class="t" style="left:263.30px;top:579.90px;font-size:11.4px;line-height:14px;color:#595959;letter-spacing:-0.627px;">D-1</span><span class="t" style="left:299.30px;top:579.90px;font-size:11.4px;line-height:14px;color:#595959;letter-spacing:-0.627px;">D-2</span><svg width="470" height="270" style="left:50px;top:350px" viewBox="50 350 470 270"><circle cx="59.5" cy="356.5" r="4.500" fill="#fff" stroke="#8a8a8a" stroke-width="1.400"/><circle cx="282.5" cy="356.5" r="4.500" fill="#fff" stroke="#8a8a8a" stroke-width="1.400"/><circle cx="506.5" cy="356.5" r="4.500" fill="#fff" stroke="#8a8a8a" stroke-width="1.400"/><circle cx="59.5" cy="482.5" r="4.500" fill="#fff" stroke="#8a8a8a" stroke-width="1.400"/><circle cx="506.5" cy="482.5" r="4.500" fill="#fff" stroke="#8a8a8a" stroke-width="1.400"/><circle cx="59.5" cy="608.5" r="4.500" fill="#fff" stroke="#8a8a8a" stroke-width="1.400"/><circle cx="282.5" cy="608.5" r="4.500" fill="#fff" stroke="#8a8a8a" stroke-width="1.400"/><circle cx="506.5" cy="608.5" r="4.500" fill="#fff" stroke="#8a8a8a" stroke-width="1.400"/></svg><div class="a cbtn" style="top:355px"></div><div class="a cbtn" style="top:393px"></div><div class="a cbtn" style="top:431px"></div><svg width="30" height="110" style="left:519px;top:353px" viewBox="519 353 30 110" fill="none">
<path d="M533.500 358.500v20.500M523.300 368.500h20.500" stroke="#2e9b4e" stroke-width="1.100"/>
<path d="M543.600 397.400c0.800 0.800 0.500 2.200 -0.300 3.300l-9.300 10.800l-2.300 -2l10 -11.600c0.600 -0.700 1.400 -1 1.900 -0.500z" fill="#fff" stroke="#555" stroke-width="1"/>
<path d="M531.300 409.500c1.700 0.300 3 1.700 2.700 3.300c-0.600 3.300 -5.500 5 -11.500 3.500c2.500 -0.500 3.300 -1.300 3.800 -3c0.700 -2.300 2.500 -4.300 5 -3.800z" fill="#6aa8e8" stroke="#2f7ed0" stroke-width="0.700"/>
<path d="M523.500 434.500h20l-8 10.500v10h-4v-10z" fill="#fff" stroke="#3b3a39" stroke-width="1.100"/>
</svg>
<div id="tabbar" class="a"></div><div id="sheettab" class="a"></div><span class="t" style="left:113.00px;top:683.00px;font-size:12.6px;line-height:16px;color:#217346;letter-spacing:-0.206px;font-weight:700;">Sheet1</span><svg width="1213" height="30" style="left:0;top:677px" viewBox="0 677 1213 30">
<path d="M32.300 686.500v8l-4.300 -4z" fill="#c3c3c3"/><path d="M57 686.500v8l4.300 -4z" fill="#c3c3c3"/>
<circle cx="206.800" cy="690.800" r="7.300" fill="none" stroke="#6a6a6a" stroke-width="1.100"/><path d="M202.800 690.800h8M206.800 686.800v8" stroke="#6a6a6a" stroke-width="1.300"/>
<path d="M727 686h1.600v1.600h-1.600zM727 690.200h1.600v1.600h-1.600zM727 694.400h1.600v1.600h-1.600z" fill="#b0b0b0"/>
</svg><div class="a" style="left:744px;top:684px;width:15px;height:15px;background:#fff;border:1px solid #ababab"></div><div class="a" style="left:759px;top:684px;width:392px;height:15px;background:#fff;border:1px solid #ababab"></div><div class="a" style="left:1151px;top:685px;width:26px;height:13px;background:#d9d9d9"></div><div class="a" style="left:1176px;top:684px;width:15px;height:15px;background:#fff;border:1px solid #ababab"></div><svg width="460" height="16" style="left:740px;top:684px" viewBox="740 684 460 16"><path d="M754 687.500v8l-4.300 -4z" fill="#606060"/><path d="M1181.500 687.500v8l4.300 -4z" fill="#606060"/></svg><div id="status" class="a"></div><div id="viewsel" class="a"></div><span class="t" style="left:8.40px;top:710.10px;font-size:11.6px;line-height:14px;color:#444;letter-spacing:-0.681px;">Ready</span><span class="t" style="left:55.20px;top:710.10px;font-size:11.6px;line-height:14px;color:#444;letter-spacing:0.038px;">Workbook Statistics</span><span class="t" style="left:196.20px;top:710.10px;font-size:11.6px;line-height:14px;color:#444;letter-spacing:-0.130px;">Accessibility: Investigate</span><span class="t" style="left:1166.90px;top:709.30px;font-size:11.6px;line-height:14px;color:#444;letter-spacing:-1.265px;">106%</span><svg width="1213" height="22" style="left:0;top:706px" viewBox="0 706 1213 22" fill="none" stroke="#444" stroke-width="1.100">
<circle cx="183.900" cy="711" r="1.900"/><path d="M181.700 712.400l-2.600 -0.700c-1.100 -0.200 -1.600 1.400 -0.500 1.800l2.700 1l-0.800 6.500c-0.100 1.500 1.700 1.800 2.100 0.500l1.100 -3.300M186.100 712.400l2.600 -0.700c1.100 -0.200 1.600 1.400 0.500 1.800l-2.700 1"/><path d="M185.300 716.500l6.600 6.300M191.900 716.500l-6.600 6.300" stroke-width="1.100"/>
<rect x="914.500" y="709.500" width="12" height="12"/><path d="M914.500 713.500h12M914.500 717.500h12M918.500 709.500v12M922.500 709.500v12"/>
<rect x="954.500" y="709.500" width="13" height="12"/><rect x="957.500" y="712.500" width="7" height="6.500"/><path d="M959 714.500h4M959 716.700h4" stroke-width="0.800"/>
<path d="M994.500 709.500h13v12h-13zM998.500 709.500v6h5.500v-6M994.500 715.500h4" />
<path d="M1027.500 715.500h7M1145.500 715.500h7M1149 712v7"/><path d="M1040.500 715.500h99" stroke="#767676"/>
<rect x="1089.500" y="711" width="5" height="11" fill="#7a7a7a" stroke="none"/>
</svg><div id="winL" class="a"></div><div id="winR" class="a"></div><div id="winB" class="a"></div>
<div id="boxR" class="a"></div><div id="boxT" class="a"></div><svg width="200" height="260" style="left:690px;top:150px" viewBox="690 150 200 260"><path d="M709.500 176.500L832.600 392.300" stroke="#000" stroke-width="3.200" fill="none"/><path d="M703 164.600L716.300 174.800L706.300 180.800z" fill="#000"/></svg><span class="t" style="left:831.80px;top:389.20px;font-size:26.9px;line-height:32px;color:#000;letter-spacing:0.000px;font-weight:700;transform-origin:0 0;transform:scaleX(1.0485);">Chart Design Ribbon</span><svg width="20" height="20" style="left:1097px;top:625px" viewBox="1097 625 20 20"><path d="M1104.500 628.500h5v4h4v5h-4v4h-5v-4h-4v-5h4z" fill="#000" transform="translate(1 1)"/><path d="M1103.500 627.500h5.500v4h4.500v5.500h-4.500v4h-5.500v-4h-4v-5.500h4z" fill="#fff" stroke="#000" stroke-width="1"/></svg>
</div></body></html>
